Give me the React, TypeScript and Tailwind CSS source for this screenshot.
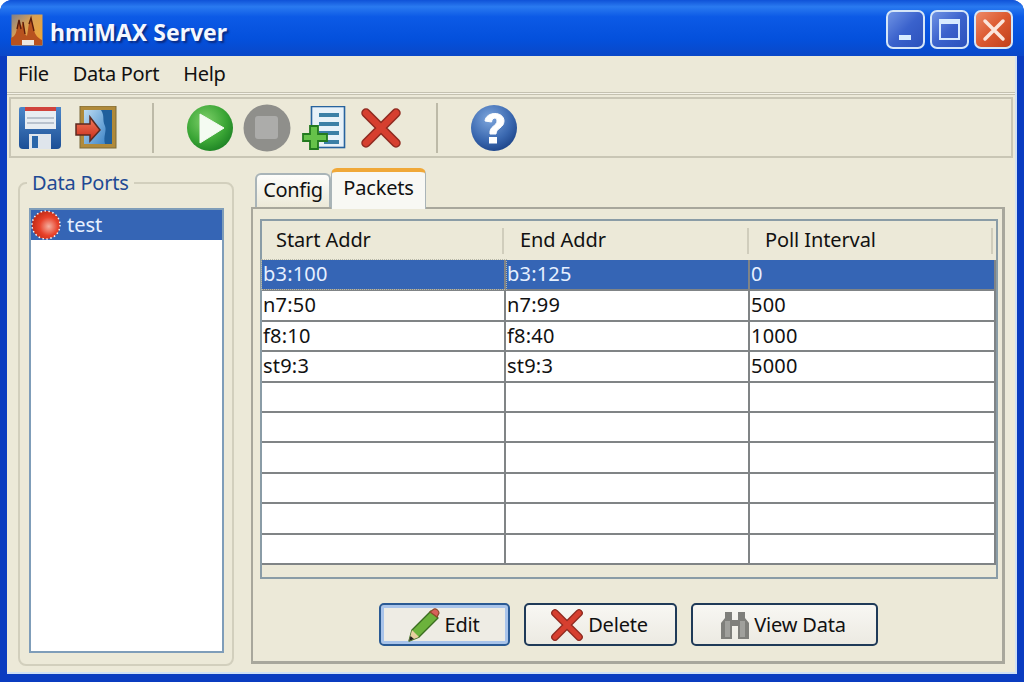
import React from 'react';

const rows = [
  ['b3:100', 'b3:125', '0'],
  ['n7:50', 'n7:99', '500'],
  ['f8:10', 'f8:40', '1000'],
  ['st9:3', 'st9:3', '5000'],
  ['', '', ''],
  ['', '', ''],
  ['', '', ''],
  ['', '', ''],
  ['', '', ''],
  ['', '', ''],
];

const AppIcon = () => (
  <svg width="32" height="32" viewBox="0 0 32 32" className="shrink-0">
    <defs>
      <linearGradient id="appbg" x1="0" y1="0" x2="1" y2="1">
        <stop offset="0" stopColor="#7d7f8c" />
        <stop offset="0.4" stopColor="#d8a055" />
        <stop offset="1" stopColor="#f5a62e" />
      </linearGradient>
    </defs>
    <rect width="31" height="31" x="0.5" y="0.5" fill="url(#appbg)" />
    <path d="M0 31V24C4 22 5 20 6 14L8 6L10 14L12 7L14 20L16 22L18 9L20 4L23 16C24 21 27 24 31 26V31H23V26H11V31Z" fill="#b8521f" />
    <path d="M6 15L8 6L10 15M12 8L14 20M18 10L20 4L23 17" stroke="#5a1c0c" strokeWidth="1.4" fill="none" />
    <rect x="11" y="26" width="12" height="5" fill="#ece8e0" />
  </svg>
);

const SaveIcon = () => (
  <svg width="42" height="42" viewBox="0 0 42 42" className="shrink-0">
    <defs>
      <linearGradient id="disk" x1="0" y1="0" x2="0" y2="1">
        <stop offset="0" stopColor="#4c86c8" />
        <stop offset="1" stopColor="#1c4f96" />
      </linearGradient>
    </defs>
    <path d="M0 2Q0 0 2 0H42V38Q42 42 38 42H4Q0 42 0 38Z" fill="url(#disk)" />
    <rect x="6" y="0" width="31" height="4" fill="#d0433c" />
    <rect x="6" y="4" width="31" height="18" fill="#e8edf2" />
    <path d="M8 11H35M8 16H35" stroke="#a9b4c2" strokeWidth="1.5" />
    <rect x="10" y="27" width="22" height="15" fill="#dfe5ec" />
    <rect x="13" y="29" width="6" height="12" fill="#2a66aa" />
  </svg>
);

const DoorIcon = () => (
  <svg width="42" height="44" viewBox="0 0 42 44" className="shrink-0">
    <defs>
      <linearGradient id="doorg" x1="0" y1="0" x2="1" y2="1">
        <stop offset="0" stopColor="#bcdcf2" />
        <stop offset="1" stopColor="#3f86c8" />
      </linearGradient>
      <linearGradient id="arr" x1="0" y1="0" x2="0" y2="1">
        <stop offset="0" stopColor="#f27c5c" />
        <stop offset="1" stopColor="#c92a18" />
      </linearGradient>
    </defs>
    <rect x="5" y="0" width="36" height="42" fill="#b08a3a" stroke="#7a6a3a" strokeWidth="1" />
    <rect x="9" y="4" width="28" height="34" fill="#1f5f9c" />
    <path d="M9 4H26C30 10 27 14 30 20C32 25 28 30 30 38H9Z" fill="url(#doorg)" />
    <path d="M1 19H15V12L25 25L15 36V30H1Z" fill="url(#arr)" stroke="#5c2a20" strokeWidth="1.5" transform="translate(0 -1)" />
  </svg>
);

const PlayIcon = () => (
  <svg width="46" height="46" viewBox="0 0 46 46" className="shrink-0">
    <defs>
      <radialGradient id="playg" cx="0.4" cy="0.35" r="0.75">
        <stop offset="0" stopColor="#7fd06a" />
        <stop offset="0.6" stopColor="#3aa535" />
        <stop offset="1" stopColor="#167a20" />
      </radialGradient>
    </defs>
    <circle cx="23" cy="23" r="23" fill="url(#playg)" />
    <path d="M13 9L37 23L13 38Z" fill="#f4fbf2" strokeLinejoin="round" stroke="#f4fbf2" strokeWidth="1" />
  </svg>
);

const StopIcon = () => (
  <svg width="48" height="48" viewBox="0 0 48 48" className="shrink-0">
    <circle cx="24" cy="24" r="23.5" fill="#8f8f8b" />
    <rect x="12" y="12" width="23" height="23" rx="3" fill="#acacaa" />
  </svg>
);

const NewIcon = () => (
  <svg width="44" height="44" viewBox="0 0 44 44" className="shrink-0">
    <rect x="9.5" y="0.5" width="33" height="41" fill="#e8f1f8" stroke="#27639e" strokeWidth="1.6" />
    <path d="M17 9H37M17 18H37M17 27H37M22 36H37" stroke="#3b7fa6" strokeWidth="4" />
    <path d="M8 20H16V28H25V35H16V43H8V35H1V28H8Z" fill="#66c24a" stroke="#237a1f" strokeWidth="1.8" />
  </svg>
);

const RedX = ({ size }: { size: number }) => (
  <svg width={size} height={size} viewBox="0 0 40 40" className="shrink-0">
    <path d="M5 5L35 35M35 5L5 35" stroke="#8f2a20" strokeWidth="9.5" strokeLinecap="round" />
    <path d="M5 5L35 35M35 5L5 35" stroke="#d63f2f" strokeWidth="6.5" strokeLinecap="round" />
  </svg>
);

const HelpIcon = () => (
  <svg width="46" height="46" viewBox="0 0 46 46" className="shrink-0">
    <defs>
      <radialGradient id="helpg" cx="0.4" cy="0.3" r="0.8">
        <stop offset="0" stopColor="#7ea6dc" />
        <stop offset="0.6" stopColor="#3a68b0" />
        <stop offset="1" stopColor="#163c80" />
      </radialGradient>
    </defs>
    <circle cx="23" cy="23" r="23" fill="url(#helpg)" />
    <path d="M14 16C15 6 33 6 33 16C33 23 25 23 25 29H19C18 21 26 21 26 16C26 12 21 12 20.500 17Z" fill="#fff" stroke="#fff" strokeWidth="1" />
    <rect x="18" y="32" width="8" height="6.500" fill="#fff" />
  </svg>
);

const PortIcon = () => (
  <svg width="30" height="30" viewBox="0 0 30 30" className="shrink-0">
    <defs>
      <radialGradient id="port" cx="0.6" cy="0.55" r="0.6">
        <stop offset="0" stopColor="#f4b0a0" />
        <stop offset="0.55" stopColor="#e8412a" />
        <stop offset="1" stopColor="#c22a14" />
      </radialGradient>
    </defs>
    <circle cx="15" cy="15" r="14" fill="url(#port)" stroke="#f6f6f6" strokeWidth="1.5" strokeDasharray="1.5 2.5" />
  </svg>
);

const PencilIcon = () => (
  <svg width="32" height="34" viewBox="0 0 32 34" className="shrink-0">
    <path d="M1 33L4 22L23 3L30 10L11 29Z" fill="#6cb23c" stroke="#3b6e20" strokeWidth="1.4" strokeLinejoin="round" />
    <path d="M22 4L26 1C28 0 31 3 31 5L29 9Z" fill="#d8605a" stroke="#8c4a2a" strokeWidth="1.2" />
    <path d="M4 22L11 29L1 33Z" fill="#e8cfa0" />
    <path d="M1 33L2.500 28L6 31Z" fill="#222" />
  </svg>
);

const BinocularsIcon = () => (
  <svg width="28" height="28" viewBox="0 0 28 28" className="shrink-0">
    <path d="M4 1H11V9H17V1H24V7L28 12V28H17V15H11V28H0V12L4 7Z" fill="#7f7f7b" />
    <path d="M4 10H9V26H4ZM19 10H24V26H19Z" fill="#a0a09c" />
  </svg>
);

const WinButton = ({ children, red }: { children: React.ReactNode; red?: boolean }) => (
  <div
    className={`flex h-[39px] w-[39px] items-center justify-center rounded-[7px] border-2 border-[#d5e6f8] ${
      red
        ? 'bg-[linear-gradient(135deg,#ec8a68,#dc5a30_50%,#c0401c)]'
        : 'bg-[linear-gradient(135deg,#6f93e4,#3a62cc_50%,#2c52bc)]'
    }`}
  >
    {children}
  </div>
);

const ToolSep = () => <div className="h-[50px] w-[2px] shrink-0 bg-[#bdbaa8]" />;

const ActionButton = ({ children, focused, width }: { children: React.ReactNode; focused?: boolean; width: string }) => (
  <button
    className={`flex h-[43px] items-center justify-center gap-[5px] rounded-[5px] border-2 border-[#1f3a58] pr-[2px] text-[20px] tracking-[-0.2px] text-[#111] ${width} ${
      focused
        ? 'border-[#2a5a94] bg-[#eeece4] shadow-[inset_0_0_0_3px_#a9c4ea]'
        : 'bg-[linear-gradient(#f8f7f3,#eceae2)]'
    }`}
  >
    {children}
  </button>
);

export default function App() {
  return (
    <div className="h-[682px] w-[1024px] overflow-hidden bg-white font-['Noto_Sans',sans-serif] text-[#111]">
      <div className="flex h-full flex-col rounded-t-[12px] bg-[#0a3cc0]">
        {/* Title bar */}
        <div className="flex h-[56px] shrink-0 items-center rounded-t-[12px] bg-[linear-gradient(#0f52d8,#2a7af0_12%,#0c5ae6_30%,#0450dc_70%,#0a48c8)] pl-[11px] pr-[11px] pt-[3px]">
          <AppIcon />
          <span className="ml-[7px] mt-[5px] text-[23px] font-bold text-[#f4f8ff] [text-shadow:2px_2px_2px_#0a2a80]">
            hmiMAX Server
          </span>
          <div className="ml-auto flex items-center gap-[5px]">
            <WinButton>
              <div className="mt-[16px] mr-[1px] h-[5px] w-[12px] bg-[#d8ecff]" />
            </WinButton>
            <WinButton>
              <div className="h-[21px] w-[21px] border-2 border-t-[5px] border-[#d8ecff]" />
            </WinButton>
            <WinButton red>
              <svg width="24" height="24" viewBox="0 0 24 24">
                <path d="M3 3L21 21M21 3L3 21" stroke="#fbe6dc" strokeWidth="3.500" strokeLinecap="round" />
              </svg>
            </WinButton>
          </div>
        </div>

        {/* Window body */}
        <div className="mx-[7px] mb-[8px] flex min-h-0 flex-1 flex-col border-b-2 border-r-2 border-[#cfe0f4] bg-[#ece9d8]">
          {/* Menu */}
          <div className="flex h-[36px] shrink-0 items-center gap-[24px] pl-[11px] text-[20px] tracking-[-0.3px]">
            <span>File</span>
            <span>Data Port</span>
            <span>Help</span>
          </div>
          <div className="h-[3px] shrink-0 border-y border-[#c4c1b0] bg-[#f4f2e8]" />

          {/* Toolbar */}
          <div className="mx-[2px] mt-[2px] flex h-[61px] shrink-0 items-center border-2 border-[#c9c6b5] pl-[8px]">
            <SaveIcon />
            <div className="ml-[14px]">
              <DoorIcon />
            </div>
            <div className="ml-[35px]">
              <ToolSep />
            </div>
            <div className="ml-[33px]">
              <PlayIcon />
            </div>
            <div className="ml-[10px]">
              <StopIcon />
            </div>
            <div className="ml-[11px]">
              <NewIcon />
            </div>
            <div className="ml-[15px]">
              <RedX size={40} />
            </div>
            <div className="ml-[35px]">
              <ToolSep />
            </div>
            <div className="ml-[33px]">
              <HelpIcon />
            </div>
          </div>

          {/* Main */}
          <div className="flex min-h-0 flex-1 pb-[8px] pl-[11px]">
            {/* Data ports group */}
            <fieldset className="mt-[11px] flex h-[497px] w-[216px] shrink-0 flex-col rounded-[8px] border-2 border-[#d2cfbd] pl-[9px] pr-[8px] pb-[10px]">
              <legend className="ml-[-2px] px-[5px] text-[20px] leading-[27px] tracking-[-0.2px] text-[#1f4a94]">Data Ports</legend>
              <div className="mt-[12px] h-[445px] border-2 border-[#7f9db9] bg-white">
                <div className="flex h-[30px] items-center bg-[#3565b5] text-[20px] text-[#e6f0ff]">
                  <PortIcon />
                  <span className="ml-[6px]">test</span>
                </div>
              </div>
            </fieldset>

            {/* Tabs */}
            <div className="ml-[17px] mt-[10px] flex w-[754px] shrink-0 flex-col">
              <div className="flex h-[39px] shrink-0 items-end pl-[4px]">
                <div className="flex h-[34px] w-[76px] items-center justify-center rounded-t-[6px] border-2 border-b-0 border-[#a9b4b8] bg-[linear-gradient(#fdfdfb,#ece9d8)] pb-[2px] text-[20px] tracking-[-0.3px]">
                  Config
                </div>
                <div className="relative z-10 -mb-[2px] flex h-[41px] w-[95px] items-center justify-center rounded-t-[6px] border-x border-[#a9b4b8] border-t-[4px] border-t-[#f0a838] bg-[#f8f8f4] pb-[5px] text-[20px] tracking-[-0.2px]">
                  Packets
                </div>
              </div>
              <div className="flex h-[457px] flex-col border-2 border-b-[3px] border-r-[3px] border-[#a8a79c] px-[7px] pt-[10px]">
                {/* Packet table */}
                <div className="h-[360px] w-[738px] border-2 border-[#8a9ca6] bg-[#ece9d8]">
                  <div className="grid h-[39px] w-[733px] grid-cols-[244px_245px_244px] items-center text-[20px] tracking-[-0.1px]">
                    {['Start Addr', 'End Addr', 'Poll Interval'].map((title) => (
                      <div key={title} className="flex h-[26px] items-center justify-between pl-[14px] pr-[2px]">
                        <span className="pb-[2px]">{title}</span>
                        <div className="h-[26px] w-[2px] bg-[#d0cdbc]" />
                      </div>
                    ))}
                  </div>
                  <div className="w-[734px] border-r-2 border-[#808486] bg-white">
                    {rows.map((row, i) => (
                      <div
                        key={i}
                        className={`grid grid-cols-[244px_244px_244px] border-b-2 border-[#808486] text-[20px] leading-[28px] tracking-[0.2px] ${
                          i === 0 ? 'h-[31.4px] bg-[#3565b5] text-[#e6f0ff]' : 'h-[30.4px] text-[#111]'
                        }`}
                      >
                        {row.map((cell, j) => (
                          <div
                            key={j}
                            className={`h-full pl-[1px] ${j < 2 ? 'border-r-2 border-[#808486]' : ''} ${
                              i === 0 && j === 0 ? 'border-r-0 outline-1 outline-dotted outline-[#b8b8a8]' : ''
                            } ${i === 0 ? 'border-[#3565b5]' : ''}`}
                          >
                            {cell}
                          </div>
                        ))}
                      </div>
                    ))}
                  </div>
                </div>

                {/* Actions */}
                <div className="mt-[24px] flex justify-center gap-[14px] pl-[2px]">
                  <ActionButton focused width="w-[131px]">
                    <PencilIcon />
                    <span>Edit</span>
                  </ActionButton>
                  <ActionButton width="w-[153px]">
                    <RedX size={32} />
                    <span>Delete</span>
                  </ActionButton>
                  <ActionButton width="w-[187px]">
                    <BinocularsIcon />
                    <span>View Data</span>
                  </ActionButton>
                </div>
              </div>
            </div>
          </div>
        </div>
      </div>
    </div>
  );
}
